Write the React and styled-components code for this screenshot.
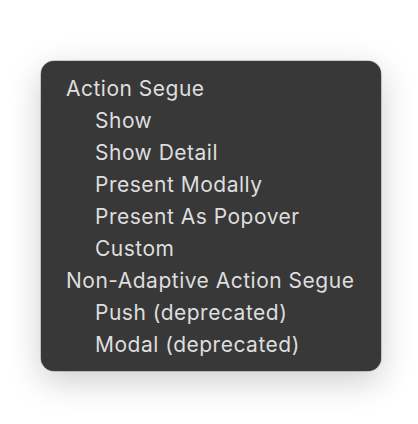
import React from 'react'
import styled, { createGlobalStyle } from 'styled-components'

const Global = createGlobalStyle`
  html, body {
    margin: 0;
    padding: 0;
    background: #ffffff;
  }
`

const Page = styled.div`
  width: 418px;
  height: 424px;
  padding: 61px 0 0 41px;
  box-sizing: border-box;
`

const Menu = styled.ul`
  width: 340px;
  height: 310px;
  box-sizing: border-box;
  margin: 0;
  padding: 12px 0 0 25px;
  list-style: none;
  background: #383838;
  border-radius: 13px;
  box-shadow: 0 10px 34px rgba(0, 0, 0, 0.2), 0 0 0 0.5px rgba(0, 0, 0, 0.35);
  font-family: Inter, "Liberation Sans", sans-serif;
  font-size: 21px;
  letter-spacing: 0.5px;
  color: #dedede;
`

const Item = styled.li`
  height: 32px;
  line-height: 32px;
  padding-left: ${p => (p.$sub ? 29 : 0)}px;
  white-space: nowrap;
`

const groups = [
  { title: 'Action Segue', items: ['Show', 'Show Detail', 'Present Modally', 'Present As Popover', 'Custom'] },
  { title: 'Non-Adaptive Action Segue', items: ['Push (deprecated)', 'Modal (deprecated)'] },
]

export default function App() {
  return (
    <>
      <Global />
      <Page>
        <Menu>
          {groups.map(g => (
            <React.Fragment key={g.title}>
              <Item>{g.title}</Item>
              {g.items.map(i => (
                <Item key={i} $sub>{i}</Item>
              ))}
            </React.Fragment>
          ))}
        </Menu>
      </Page>
    </>
  )
}
